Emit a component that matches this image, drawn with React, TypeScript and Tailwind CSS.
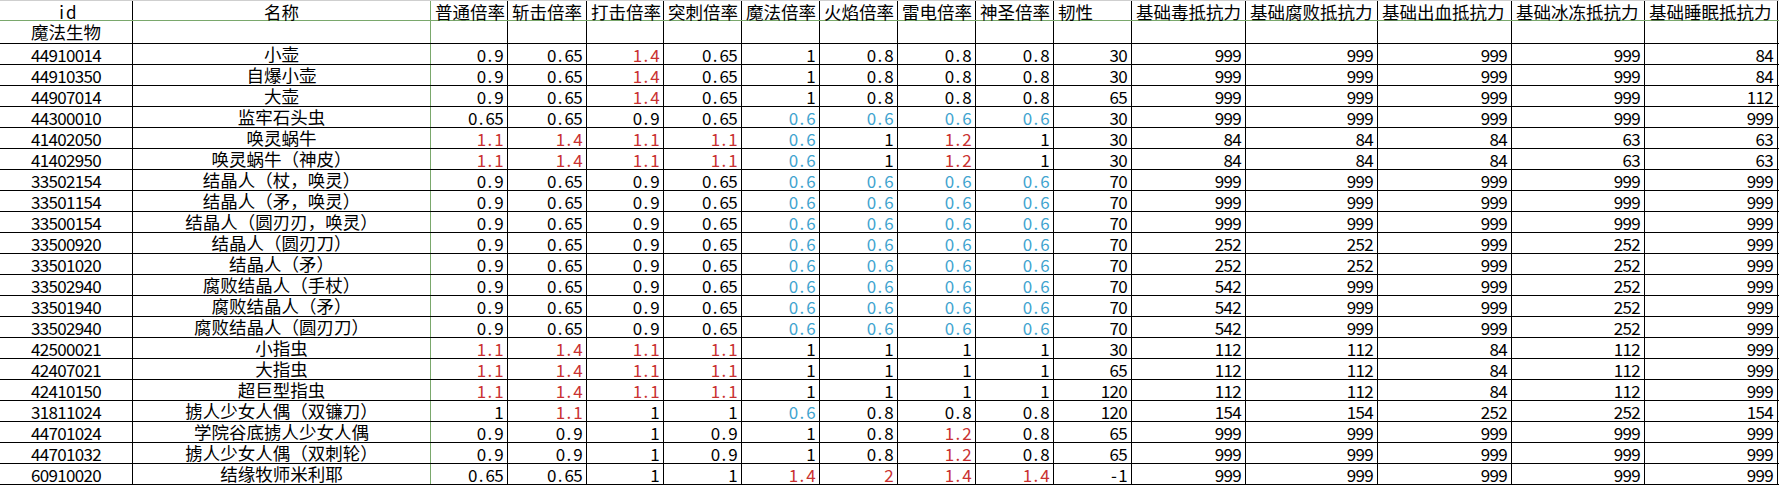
const widths = [
  'w-[133px]', 'w-[298px]', 'w-[77px]', 'w-[79px]', 'w-[77px]', 'w-[78px]', 'w-[78px]', 'w-[78px]',
  'w-[78px]', 'w-[78px]', 'w-[78px]', 'w-[114px]', 'w-[132px]', 'w-[134px]', 'w-[133px]', 'w-[133px]',
];

const headers = [
  'id', '名称', '普通倍率', '斩击倍率', '打击倍率', '突刺倍率', '魔法倍率', '火焰倍率',
  '雷电倍率', '神圣倍率', '韧性', '基础毒抵抗力', '基础腐败抵抗力', '基础出血抵抗力',
  '基础冰冻抵抗力', '基础睡眠抵抗力',
];

// suffix r = red text, b = blue text
const rows: [string, string, string[]][] = [
  ['44910014', '小壶', ['0.9', '0.65', '1.4r', '0.65', '1', '0.8', '0.8', '0.8', '30', '999', '999', '999', '999', '84']],
  ['44910350', '自爆小壶', ['0.9', '0.65', '1.4r', '0.65', '1', '0.8', '0.8', '0.8', '30', '999', '999', '999', '999', '84']],
  ['44907014', '大壶', ['0.9', '0.65', '1.4r', '0.65', '1', '0.8', '0.8', '0.8', '65', '999', '999', '999', '999', '112']],
  ['44300010', '监牢石头虫', ['0.65', '0.65', '0.9', '0.65', '0.6b', '0.6b', '0.6b', '0.6b', '30', '999', '999', '999', '999', '999']],
  ['41402050', '唤灵蜗牛', ['1.1r', '1.4r', '1.1r', '1.1r', '0.6b', '1', '1.2r', '1', '30', '84', '84', '84', '63', '63']],
  ['41402950', '唤灵蜗牛（神皮）', ['1.1r', '1.4r', '1.1r', '1.1r', '0.6b', '1', '1.2r', '1', '30', '84', '84', '84', '63', '63']],
  ['33502154', '结晶人（杖，唤灵）', ['0.9', '0.65', '0.9', '0.65', '0.6b', '0.6b', '0.6b', '0.6b', '70', '999', '999', '999', '999', '999']],
  ['33501154', '结晶人（矛，唤灵）', ['0.9', '0.65', '0.9', '0.65', '0.6b', '0.6b', '0.6b', '0.6b', '70', '999', '999', '999', '999', '999']],
  ['33500154', '结晶人（圆刃刃，唤灵）', ['0.9', '0.65', '0.9', '0.65', '0.6b', '0.6b', '0.6b', '0.6b', '70', '999', '999', '999', '999', '999']],
  ['33500920', '结晶人（圆刃刀）', ['0.9', '0.65', '0.9', '0.65', '0.6b', '0.6b', '0.6b', '0.6b', '70', '252', '252', '999', '252', '999']],
  ['33501020', '结晶人（矛）', ['0.9', '0.65', '0.9', '0.65', '0.6b', '0.6b', '0.6b', '0.6b', '70', '252', '252', '999', '252', '999']],
  ['33502940', '腐败结晶人（手杖）', ['0.9', '0.65', '0.9', '0.65', '0.6b', '0.6b', '0.6b', '0.6b', '70', '542', '999', '999', '252', '999']],
  ['33501940', '腐败结晶人（矛）', ['0.9', '0.65', '0.9', '0.65', '0.6b', '0.6b', '0.6b', '0.6b', '70', '542', '999', '999', '252', '999']],
  ['33502940', '腐败结晶人（圆刃刀）', ['0.9', '0.65', '0.9', '0.65', '0.6b', '0.6b', '0.6b', '0.6b', '70', '542', '999', '999', '252', '999']],
  ['42500021', '小指虫', ['1.1r', '1.4r', '1.1r', '1.1r', '1', '1', '1', '1', '30', '112', '112', '84', '112', '999']],
  ['42407021', '大指虫', ['1.1r', '1.4r', '1.1r', '1.1r', '1', '1', '1', '1', '65', '112', '112', '84', '112', '999']],
  ['42410150', '超巨型指虫', ['1.1r', '1.4r', '1.1r', '1.1r', '1', '1', '1', '1', '120', '112', '112', '84', '112', '999']],
  ['31811024', '掳人少女人偶（双镰刀）', ['1', '1.1r', '1', '1', '0.6b', '0.8', '0.8', '0.8', '120', '154', '154', '252', '252', '154']],
  ['44701024', '学院谷底掳人少女人偶', ['0.9', '0.9', '1', '0.9', '1', '0.8', '1.2r', '0.8', '65', '999', '999', '999', '999', '999']],
  ['44701032', '掳人少女人偶（双刺轮）', ['0.9', '0.9', '1', '0.9', '1', '0.8', '1.2r', '0.8', '65', '999', '999', '999', '999', '999']],
  ['60910020', '结缘牧师米利耶', ['0.65', '0.65', '1', '1', '1.4r', '2r', '1.4r', '1.4r', '-1', '999', '999', '999', '999', '999']],
];

// spreadsheet font draws digits and the dot on equal half-em cells
function Mono({ text }: { text: string }) {
  return (
    <span className="inline-flex text-[17px]">
      {text.split('').map((c, i) => (
        <span key={i} className="inline-block w-[8.75px] text-center">
          {c}
        </span>
      ))}
    </span>
  );
}

function edge(ci: number) {
  return ci === 1 ? 'border-r-[#7aa86c]' : 'border-r-black';
}

export default function App() {
  return (
    <div
      className="w-[1779px] h-[486px] bg-white text-black overflow-hidden text-[17.5px]"
      style={{ fontFamily: '"Noto Sans CJK SC", "Noto Sans", sans-serif' }}
    >
      {/* header row */}
      <div className="flex h-[21px] border-t border-t-[#cfcfcf] border-b border-b-[#7aa86c]">
        {headers.map((h, ci) => (
          <div
            key={ci}
            className={`${widths[ci]} shrink-0 border-r ${edge(ci)} flex items-center pt-[2px] leading-[17px] whitespace-nowrap ${
              ci < 2 ? 'justify-center' : 'justify-start pl-[4px]'
            }`}
          >
            {ci === 0 ? <Mono text={h} /> : h}
          </div>
        ))}
      </div>

      {/* group row */}
      <div className="flex h-[23px] border-b border-b-black">
        {headers.map((_, ci) => (
          <div
            key={ci}
            className={`${widths[ci]} shrink-0 border-r ${edge(ci)} flex items-end justify-center pb-[1px] leading-[20px]`}
          >
            {ci === 0 ? '魔法生物' : ''}
          </div>
        ))}
      </div>

      {rows.map(([id, name, vals], ri) => (
        <div key={ri} className="flex h-[21px] border-b border-b-black">
          <div className={`${widths[0]} shrink-0 border-r border-r-black flex items-end justify-center leading-[19px]`}>
            <Mono text={id} />
          </div>
          <div
            className={`${widths[1]} shrink-0 border-r ${edge(1)} flex items-end justify-center pb-[1px] leading-[19px] whitespace-nowrap`}
          >
            {name}
          </div>
          {vals.map((v, vi) => {
            const color = v.endsWith('r') ? 'text-[#c93232]' : v.endsWith('b') ? 'text-[#3fa4cf]' : 'text-black';
            return (
              <div
                key={vi}
                className={`${widths[vi + 2]} shrink-0 border-r border-r-black flex items-end justify-end pr-[4px] leading-[19px] ${color}`}
              >
                <Mono text={v.replace(/[rb]$/, '')} />
              </div>
            );
          })}
        </div>
      ))}
    </div>
  );
}
